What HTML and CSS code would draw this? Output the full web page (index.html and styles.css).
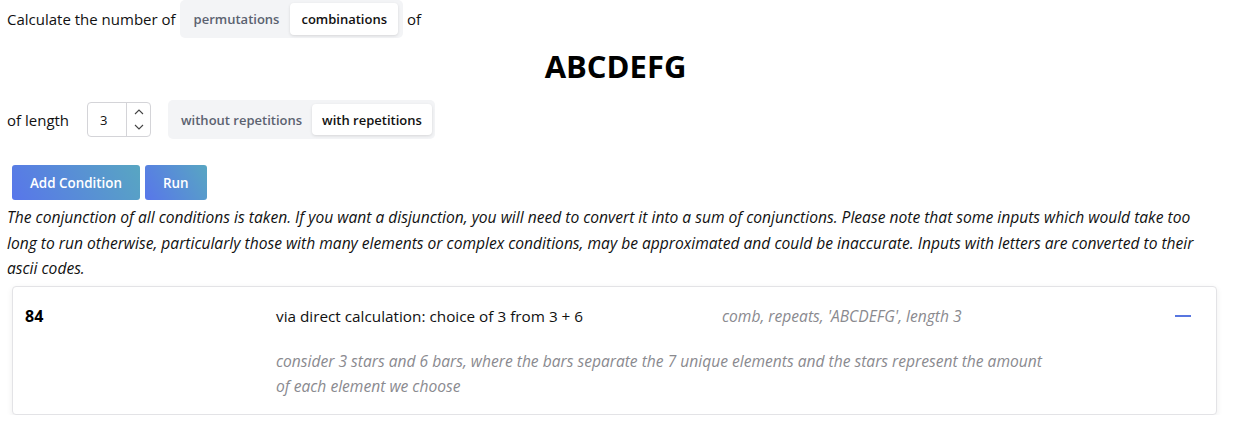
FILE: index.html
```html
<!DOCTYPE html>
<html>
<head>
<meta charset="utf-8">
<link rel="stylesheet" href="styles.css">
</head>
<body>
<div class="page">
  <div class="row row-first">
    <span class="label">Calculate the number of</span>
    <div class="seg">
      <span class="seg-btn">permutations</span>
      <span class="seg-btn active">combinations</span>
    </div>
    <span class="label of">of</span>
  </div>

  <h1 class="word">ABCDEFG</h1>

  <div class="row row-second">
    <span class="label">of length</span>
    <div class="num">
      <span class="num-val">3</span>
      <span class="spin">
        <svg width="10" height="6" viewBox="0 0 10 6"><path d="M1 5 L5 1 L9 5" fill="none" stroke="#444" stroke-width="1.1"/></svg>
        <svg width="10" height="6" viewBox="0 0 10 6"><path d="M1 1 L5 5 L9 1" fill="none" stroke="#444" stroke-width="1.1"/></svg>
      </span>
    </div>
    <div class="seg seg-rep">
      <span class="seg-btn">without repetitions</span>
      <span class="seg-btn active">with repetitions</span>
    </div>
  </div>

  <div class="buttons">
    <button class="btn">Add Condition</button>
    <button class="btn">Run</button>
  </div>

  <p class="note">The conjunction of all conditions is taken. If you want a disjunction, you will need to convert it into a sum of conjunctions. Please note that some inputs which would take too long to run otherwise, particularly those with many elements or complex conditions, may be approximated and could be inaccurate. Inputs with letters are converted to their ascii codes.</p>

  <div class="card">
    <div class="result">84</div>
    <div class="method">via direct calculation: choice of 3 from 3 + 6</div>
    <div class="params">comb, repeats, 'ABCDEFG', length 3</div>
    <div class="toggle"><span class="minus"></span></div>
    <div class="desc">consider 3 stars and 6 bars, where the bars separate the 7 unique elements and the stars represent the amount of each element we choose</div>
  </div>
</div>
</body>
</html>
```

FILE: styles.css
```css
* { box-sizing: border-box; }

body {
  margin: 0;
  background: #ffffff;
  color: #111111;
  font-family: "Open Sans", "Noto Sans", sans-serif;
  font-size: 15px;
}

.page {
  padding: 0 16px 0 7px;
}

.row {
  display: flex;
  align-items: center;
}

.row-first {
  height: 38px;
}

.label {
  color: #111111;
  font-size: 15px;
}

.of {
  margin-left: 4px;
}

.seg {
  display: flex;
  align-items: center;
  background: #f3f4f6;
  border-radius: 5px;
  padding: 3px 5px 3px 3px;
  height: 38px;
  margin-left: 4px;
}

.seg-btn {
  display: flex;
  align-items: center;
  height: 32px;
  padding: 0 11px;
  font-size: 13px;
  font-weight: 600;
  color: #5b6270;
  border-radius: 4px;
}

.seg-btn.active {
  background: #ffffff;
  color: #111111;
  box-shadow: 0 1px 3px rgba(0, 0, 0, 0.12);
}

.word {
  margin: 0;
  text-align: center;
  font-size: 31px;
  font-weight: 700;
  line-height: 40px;
  padding-top: 8px;
  height: 62px;
  color: #000000;
  padding-left: 7px;
}

.row-second {
  height: 39px;
}

.row-second .label {
  width: 80px;
}

.num {
  display: flex;
  height: 35px;
  width: 64px;
  border: 1px solid #d4d4d8;
  border-radius: 4px;
  background: #fff;
}

.num-val {
  flex: 1;
  display: flex;
  align-items: center;
  padding-left: 12px;
  font-size: 13px;
  color: #111;
}

.spin {
  width: 24px;
  border-left: 1px solid #d4d4d8;
  display: flex;
  flex-direction: column;
  align-items: center;
  justify-content: space-between;
  padding: 6px 0 6px;
}

.seg-rep {
  margin-left: 17px;
  height: 39px;
  padding: 4px 3px 4px 3px;
}

.seg-rep .seg-btn {
  height: 31px;
  padding: 0 10px;
}

.buttons {
  display: flex;
  gap: 5px;
  margin-top: 26px;
  padding-left: 5px;
}

.btn {
  height: 35px;
  border: none;
  border-radius: 3px;
  padding: 0 18px;
  color: #ffffff;
  font-family: "Open Sans", "Noto Sans", sans-serif;
  font-size: 13.4px;
  font-weight: 600;
  background: linear-gradient(60deg, #5876ea 0%, #58a6c2 100%);
}

.note {
  margin: 5px 0 0;
  font-style: italic;
  font-size: 15.6px;
  line-height: 25.6px;
  color: #111111;
}

.card {
  margin: 4px 0 0 5px;
  border: 1px solid #e3e3e6;
  border-radius: 4px;
  box-shadow: 0 2px 6px rgba(0, 0, 0, 0.07);
  background: #fff;
  display: grid;
  grid-template-columns: 251px 446px 1fr 22px;
  padding: 16px 19px 14px 12px;
  height: 129px;
}

.result {
  font-weight: 700;
  font-size: 16px;
  line-height: 26px;
  color: #000;
}

.method {
  font-size: 15.3px;
  line-height: 26px;
  color: #111;
}

.params {
  font-size: 15.6px;
  line-height: 26px;
  font-style: italic;
  color: #8a8a8f;
}

.toggle {
  display: flex;
  align-items: center;
  height: 26px;
}

.minus {
  display: block;
  width: 16px;
  height: 2px;
  background: #5876e0;
}

.desc {
  grid-column: 2 / 4;
  width: 775px;
  margin-top: 20px;
  font-size: 15.6px;
  line-height: 25.6px;
  font-style: italic;
  color: #8a8a8f;
}
```
